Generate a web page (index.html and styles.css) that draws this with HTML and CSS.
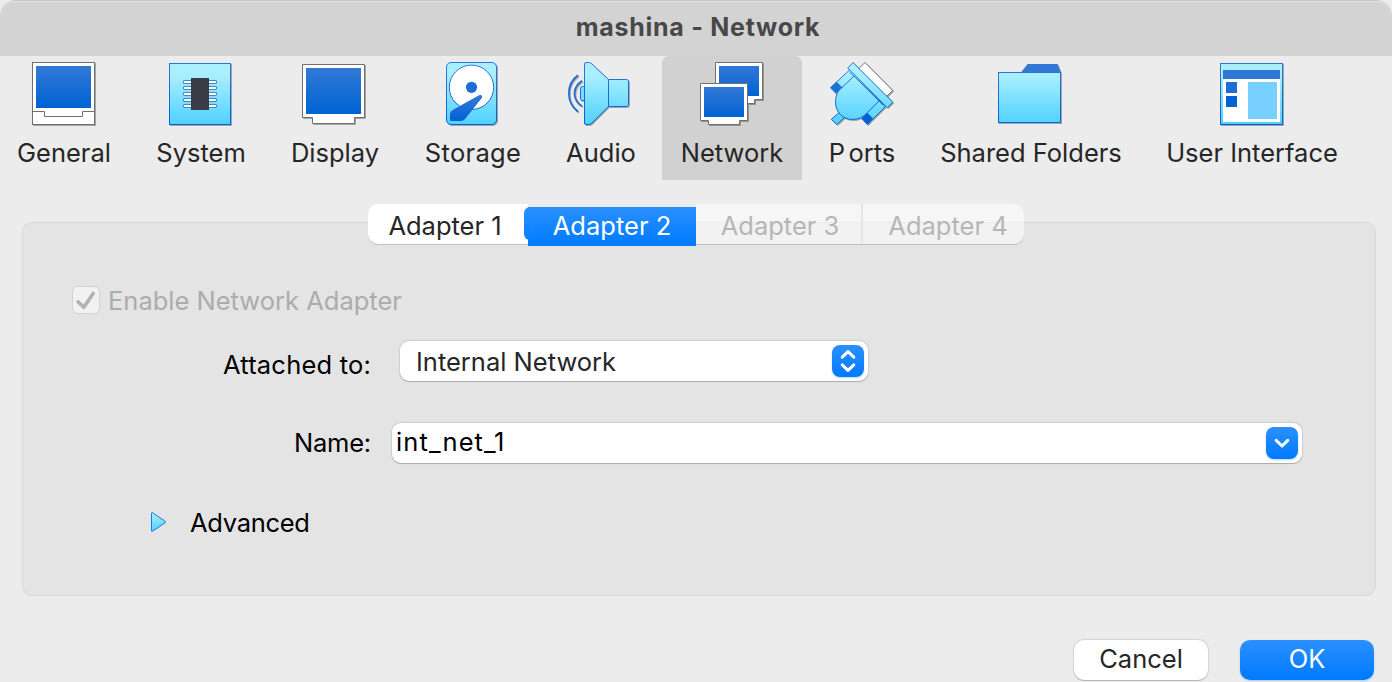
FILE: index.html
```html
<!DOCTYPE html>
<html lang="en">
<head>
<meta charset="utf-8">
<title>mashina - Network</title>
<link rel="stylesheet" href="styles.css">
</head>
<body>
<svg class="defs" width="0" height="0">
  <defs>
    <linearGradient id="blue" x1="0" y1="0" x2="0" y2="1"><stop offset="0.05" stop-color="#3078d6"/><stop offset="1" stop-color="#0062d3"/></linearGradient>
    <linearGradient id="edge" gradientUnits="userSpaceOnUse" x1="0" y1="0" x2="0" y2="65"><stop offset="0.1" stop-color="#2f76d4"/><stop offset="1" stop-color="#0062d6"/></linearGradient>
    <linearGradient id="cyan" gradientUnits="userSpaceOnUse" x1="0" y1="1" x2="0" y2="64"><stop offset="0.2" stop-color="#aaefff"/><stop offset="1" stop-color="#4fd0ff"/></linearGradient>
    <linearGradient id="tri" x1="0" y1="0" x2="0" y2="1"><stop offset="0" stop-color="#aaefff"/><stop offset="1" stop-color="#4fd0ff"/></linearGradient>
  </defs>
</svg>
<div class="window">
  <header class="titlebar">mashina - Network</header>
  <nav class="toolbar">
    <div class="tool general">
      <svg class="icon" viewBox="0 0 66 66">
        <rect x="1.5" y="1.5" width="62" height="62" fill="#fff" stroke="#707070"/>
        <rect x="5" y="5" width="55" height="42" fill="url(#blue)"/>
        <path d="M1.5 50.5H13.5V55.5H51.5V50.5H63.5" fill="none" stroke="#707070"/>
      </svg>
      <span class="label">General</span>
    </div>
    <div class="tool system">
      <svg class="icon" viewBox="0 0 66 66">
        <rect x="1.5" y="2.5" width="61" height="61" fill="url(#cyan)" stroke="url(#edge)"/>
        <g fill="#fff" stroke="#4189c9">
          <rect x="15.5" y="19.5" width="33" height="3" rx=".5"/><rect x="15.5" y="25.5" width="33" height="3" rx=".5"/><rect x="15.5" y="31.5" width="33" height="3" rx=".5"/><rect x="15.5" y="37.5" width="33" height="3" rx=".5"/><rect x="15.5" y="43.5" width="33" height="3" rx=".5"/>
        </g>
        <rect x="23" y="17" width="18" height="32" fill="#393c47"/>
      </svg>
      <span class="label">System</span>
    </div>
    <div class="tool display">
      <svg class="icon" viewBox="0 0 66 66">
        <path d="M1.5 3.5H63.5V56.5H53.5V62.5H11.5V56.5H1.5Z" fill="#fff" stroke="#707070"/>
        <rect x="5" y="7" width="55" height="46" fill="url(#blue)"/>
      </svg>
      <span class="label">Display</span>
    </div>
    <div class="tool storage">
      <svg class="icon" viewBox="0 0 66 66">
        <rect x="6.5" y="1.5" width="50" height="62" rx="4.5" fill="url(#cyan)" stroke="url(#edge)"/>
        <circle cx="31.5" cy="26.3" r="22.2" fill="#fff" stroke="url(#edge)"/>
        <circle cx="31.5" cy="26.3" r="5.6" fill="#1c6dd4"/>
        <path d="M11.8 49.4L39 34.2Q42.6 33.2 42 36.8L25 58Q23.4 60 21 60H11.2Q10 60 10 58.5V53Q10.2 50.4 11.8 49.4Z" fill="url(#blue)"/>
      </svg>
      <span class="label">Storage</span>
    </div>
    <div class="tool audio">
      <svg class="icon" viewBox="0 0 66 66">
        <path d="M10 14.3C-2.2 23 -2.2 41.5 10 50.7M14 19.7C4 26.5 4 38.7 14 45.4" fill="none" stroke="#1a6cd5" stroke-width="1.7"/>
        <rect x="12.5" y="25.5" width="6" height="14" rx="2" fill="#7adfff" stroke="url(#edge)"/>
        <path d="M40.5 18.5H58.5Q60.5 18.5 60.5 20.5V43.5Q60.5 45.5 58.5 45.5H40.5Z" fill="url(#cyan)" stroke="url(#edge)"/>
        <path d="M16.5 3Q16.5 1.5 18 1.5H20.5Q22.5 1.5 24 3L40.5 18.5V45.5L24 62Q22.5 63.5 20.5 63.5H18Q16.5 63.5 16.5 62Z" fill="url(#cyan)" stroke="url(#edge)"/>
      </svg>
      <span class="label">Audio</span>
    </div>
    <div class="tool network selected">
      <svg class="icon" viewBox="0 0 66 66">
        <path d="M16.5 1.5H63.5V38.5H55.5V42.5H24.5V38.5H16.5Z" fill="#fff" stroke="#707070"/>
        <rect x="20" y="5" width="40" height="30" fill="url(#blue)"/>
        <path d="M1.5 22.5H48.5V59.5H40.5V63.5H9.5V59.5H1.5Z" fill="#fff" stroke="#707070"/>
        <rect x="5" y="26" width="40" height="30" fill="url(#blue)"/>
      </svg>
      <span class="label">Network</span>
    </div>
    <div class="tool ports">
      <svg class="icon" viewBox="0 0 66 66" stroke-linejoin="round">
        <path d="M36 1.5L63.7 29.3L57.5 35.5L29.5 7.7Z" fill="#fff" stroke="#707070"/>
        <path d="M10.5 51.3L15.8 56.3L7.8 63.5L2.3 58.3Z" fill="url(#cyan)" stroke="url(#edge)"/>
        <path d="M21 8.5L1.5 26.8L7 32.2L13.3 26.3L38.3 51.7L33 57.8L38.3 63.5L56.3 45.7Z" fill="url(#cyan)" stroke="url(#edge)"/>
        <path d="M25 15L13.3 26.3Q6.5 30.5 6.5 41.5C6.5 51 14 58.5 23.5 58.5Q32.5 58.5 38.3 51.7L50 39.9Z" fill="url(#cyan)" stroke="url(#edge)"/>
        <path d="M1.5 26.5L7.5 20.8L13.2 26.3L7.2 32.2Z" fill="#1f70d3"/>
        <path d="M32.8 57.8L38.3 51.8L44 57.6L38.3 63.5Z" fill="#0062d4"/>
        <path d="M24 1.5L63.8 41.2L58.3 46.7L18.7 7Z" fill="url(#cyan)" stroke="url(#edge)"/>
        <path d="M20.6 11.2L25 15.2M50 39.8L54.1 44" stroke="url(#edge)"/>
      </svg>
      <span class="label"><span class="cap">P</span>orts</span>
    </div>
    <div class="tool folders">
      <svg class="icon" viewBox="0 0 66 66">
        <path d="M23 11.5L29.6 3H59.5L63 11.5Z" fill="#3078d3"/>
        <rect x=".5" y="11.5" width="62" height="50" fill="url(#cyan)" stroke="url(#edge)"/>
      </svg>
      <span class="label">Shared Folders</span>
    </div>
    <div class="tool ui">
      <svg class="icon" viewBox="0 0 66 66">
        <rect x="1.5" y="2.5" width="62" height="61" fill="url(#cyan)" stroke="url(#edge)"/>
        <rect x="4" y="9" width="57" height="52" fill="#fff"/>
        <rect x="4" y="9" width="57" height="9" fill="#3077d3"/>
        <rect x="7" y="21" width="11" height="11" fill="#1d6fd4"/>
        <rect x="7" y="35" width="11" height="11" fill="#0063d4"/>
        <rect x="29" y="21" width="29" height="37" fill="#78d0ff"/>
      </svg>
      <span class="label">User Interface</span>
    </div>
  </nav>

  <main class="panel">
    <div class="tabs">
      <div class="tab first"><span>Adapter 1</span></div>
      <div class="tab active"><span>Adapter 2</span></div>
      <div class="tab disabled third"><span>Adapter 3</span></div>
      <div class="tab disabled last"><span>Adapter 4</span></div>
    </div>
    <div class="check-row">
      <span class="checkbox"><svg width="28" height="28" viewBox="0 0 28 28"><path d="M6 15.8L11.8 21.3L21.2 7.4" fill="none" stroke="#b2b2b2" stroke-width="3.6" stroke-linecap="round" stroke-linejoin="round"/></svg></span>
      <span class="check-label">Enable Network Adapter</span>
    </div>
    <div class="row">
      <span class="field-label attached">Attached to:</span>
      <div class="select"><span class="value">Internal Network</span>
        <span class="knob"><svg width="32" height="32" viewBox="0 0 32 32"><path d="M10.2 12.2L16 6.6L21.8 12.2M10.2 19.8L16 25.4L21.8 19.8"/></svg></span>
      </div>
    </div>
    <div class="row name-row">
      <span class="field-label name">Name:</span>
      <div class="combo"><span class="value">int_net_1</span>
        <span class="knob"><svg width="32" height="32" viewBox="0 0 32 32"><path d="M10.2 13.4L16 19L21.8 13.4"/></svg></span>
      </div>
    </div>
    <div class="advanced">
      <svg width="17" height="22" viewBox="0 0 17 22"><path d="M1.5 2.3Q1.5 1 2.6 1.7L14.8 10Q16.2 11 14.8 12L2.6 20.2Q1.5 21 1.5 19.7Z" fill="url(#tri)" stroke="#2674dc"/></svg>
      <span class="advanced-label">Advanced</span>
    </div>
  </main>

  <footer class="actions">
    <div class="button cancel"><span>Cancel</span></div>
    <div class="button ok"><span>OK</span></div>
  </footer>
</div>
</body>
</html>
```

FILE: styles.css
```css
* { box-sizing: border-box; }
body {
  margin: 0;
  background: #ececec;
  font-family: Inter, "Liberation Sans", sans-serif;
  font-size: 25.5px;
  line-height: 32px;
  color: #262626;
  overflow: hidden;
}
.defs { position: absolute; }
.window {
  width: 1392px;
  height: 682px;
  background: #ececec;
  border-top: 1px solid #c4c4c4;
  border-radius: 16px 16px 0 0;
  white-space: nowrap;
}
.titlebar {
  height: 55px;
  padding: 9px 0 0 4px;
  background: #d3d3d3;
  border-top: 1px solid #e2e2e2;
  border-radius: 15px 15px 0 0;
  text-align: center;
  font-weight: 700;
  font-size: 25px;
  letter-spacing: .72px;
  color: #484848;
}
.toolbar { display: flex; height: 124px; }
.tool {
  display: flex;
  flex: none;
  flex-direction: column;
  align-items: center;
  padding-top: 5px;
}
.icon {
  display: block;
  width: 66px;
  height: 66px;
  margin-bottom: 10px;
  filter: drop-shadow(1px 1px 0 rgba(0, 0, 0, .3));
}
.general { width: 128px; }
.system { width: 146px; }
.display { width: 120px; }
.display .label { padding-left: 2px; }
.storage { width: 158px; }
.storage .label { letter-spacing: .3px; }
.audio { width: 98px; }
.network { width: 140px; margin-left: 12px; }
.ports { width: 120px; }
.cap { letter-spacing: 3.5px; }
.folders { width: 218px; }
.ui { width: 224px; }
.selected { background: #d1d1d1; border-radius: 7px 7px 0 0; }

.panel {
  width: 1354px;
  height: 374px;
  margin: 42px 0 0 22px;
  background: #e4e4e4;
  border: 1px solid #d8d8d8;
  border-radius: 10px;
}
.tabs {
  display: flex;
  width: 656px;
  height: 40px;
  margin: -19px 0 0 345px;
}
.tab {
  height: 40px;
  padding-top: 6px;
  text-align: center;
  box-shadow: 0 1px 0 #c1c1c1;
}
.first { width: 160px; padding-right: 6px; background: #fff; border-radius: 10px 0 0 10px; }
.active {
  position: relative;
  width: 168px;
  height: 39px;
  margin-top: 3px;
  padding-top: 3px;
  background: linear-gradient(#2b90ff, #007aff);
  box-shadow: none;
  color: #fff;
}
.active::before {
  content: "";
  position: absolute;
  left: -4px;
  top: 0;
  width: 10px;
  height: 33px;
  border-radius: 6px 0 0 6px;
  background: linear-gradient(#2b90ff, #0880ff);
}
.active span { position: relative; }
.disabled { background: rgba(255, 255, 255, .52); color: #b6b6b6; }
.third { width: 167px; padding-left: 3px; border-right: 2px solid #e5e5e5; }
.last { width: 161px; padding-left: 9px; border-radius: 0 10px 10px 0; }

.check-row {
  display: flex;
  height: 28px;
  margin: 42px 0 0 49px;
  gap: 8px;
  color: #acacac;
}
.checkbox {
  width: 28px;
  height: 28px;
  border: 1px solid #d3d3d3;
  border-radius: 6px;
  background: #f1f1f1;
}
.checkbox svg { display: block; margin: -1px; }
.check-label { margin-top: -1px; }
.row { display: flex; height: 40px; margin-top: 27px; color: #000; }
.name-row { margin-top: 42px; }
.field-label { width: 348px; text-align: right; }
.attached { padding-top: 8px; letter-spacing: .2px; }
.name { padding-top: 4px; letter-spacing: -.2px; }
.select, .combo {
  display: flex;
  justify-content: space-between;
  height: 40px;
  padding: 4px;
  border-radius: 9px;
  background: #fff;
  box-shadow: 0 1px 0 #adadad, 0 0 1px 1px rgba(0, 0, 0, .1);
}
.select { width: 468px; margin-left: 29px; padding-left: 16px; color: #262626; }
.select .value { margin-top: 1px; }
.combo { width: 910px; margin-left: 21px; }
.combo .value { margin-top: -1px; letter-spacing: 1.1px; }
.knob {
  width: 32px;
  height: 32px;
  border-radius: 8px;
  background: linear-gradient(#2b90ff, #007aff);
  box-shadow: 0 1px 2px rgba(0, 122, 255, .3);
}
.knob svg { display: block; fill: none; stroke: #fff; stroke-width: 3; stroke-linecap: round; stroke-linejoin: round; }
.advanced { display: flex; align-items: center; height: 32px; margin: 44px 0 0 127px; color: #000; }
.advanced svg { margin-top: -2px; }
.advanced-label { margin-left: 23px; letter-spacing: -.3px; }

.actions {
  display: flex;
  justify-content: flex-end;
  gap: 32px;
  height: 42px;
  margin-top: 44px;
  padding-right: 18px;
}
.button {
  width: 134px;
  height: 40px;
  padding-top: 3px;
  border-radius: 10px;
  text-align: center;
}
.cancel { background: #fff; box-shadow: 0 1px 0 #b8b8b8, 0 0 1px 1px rgba(0, 0, 0, .1); }
.ok { background: linear-gradient(#2b90ff, #007aff); color: #fff; box-shadow: 0 1px 2px rgba(0, 122, 255, .3); }
```
